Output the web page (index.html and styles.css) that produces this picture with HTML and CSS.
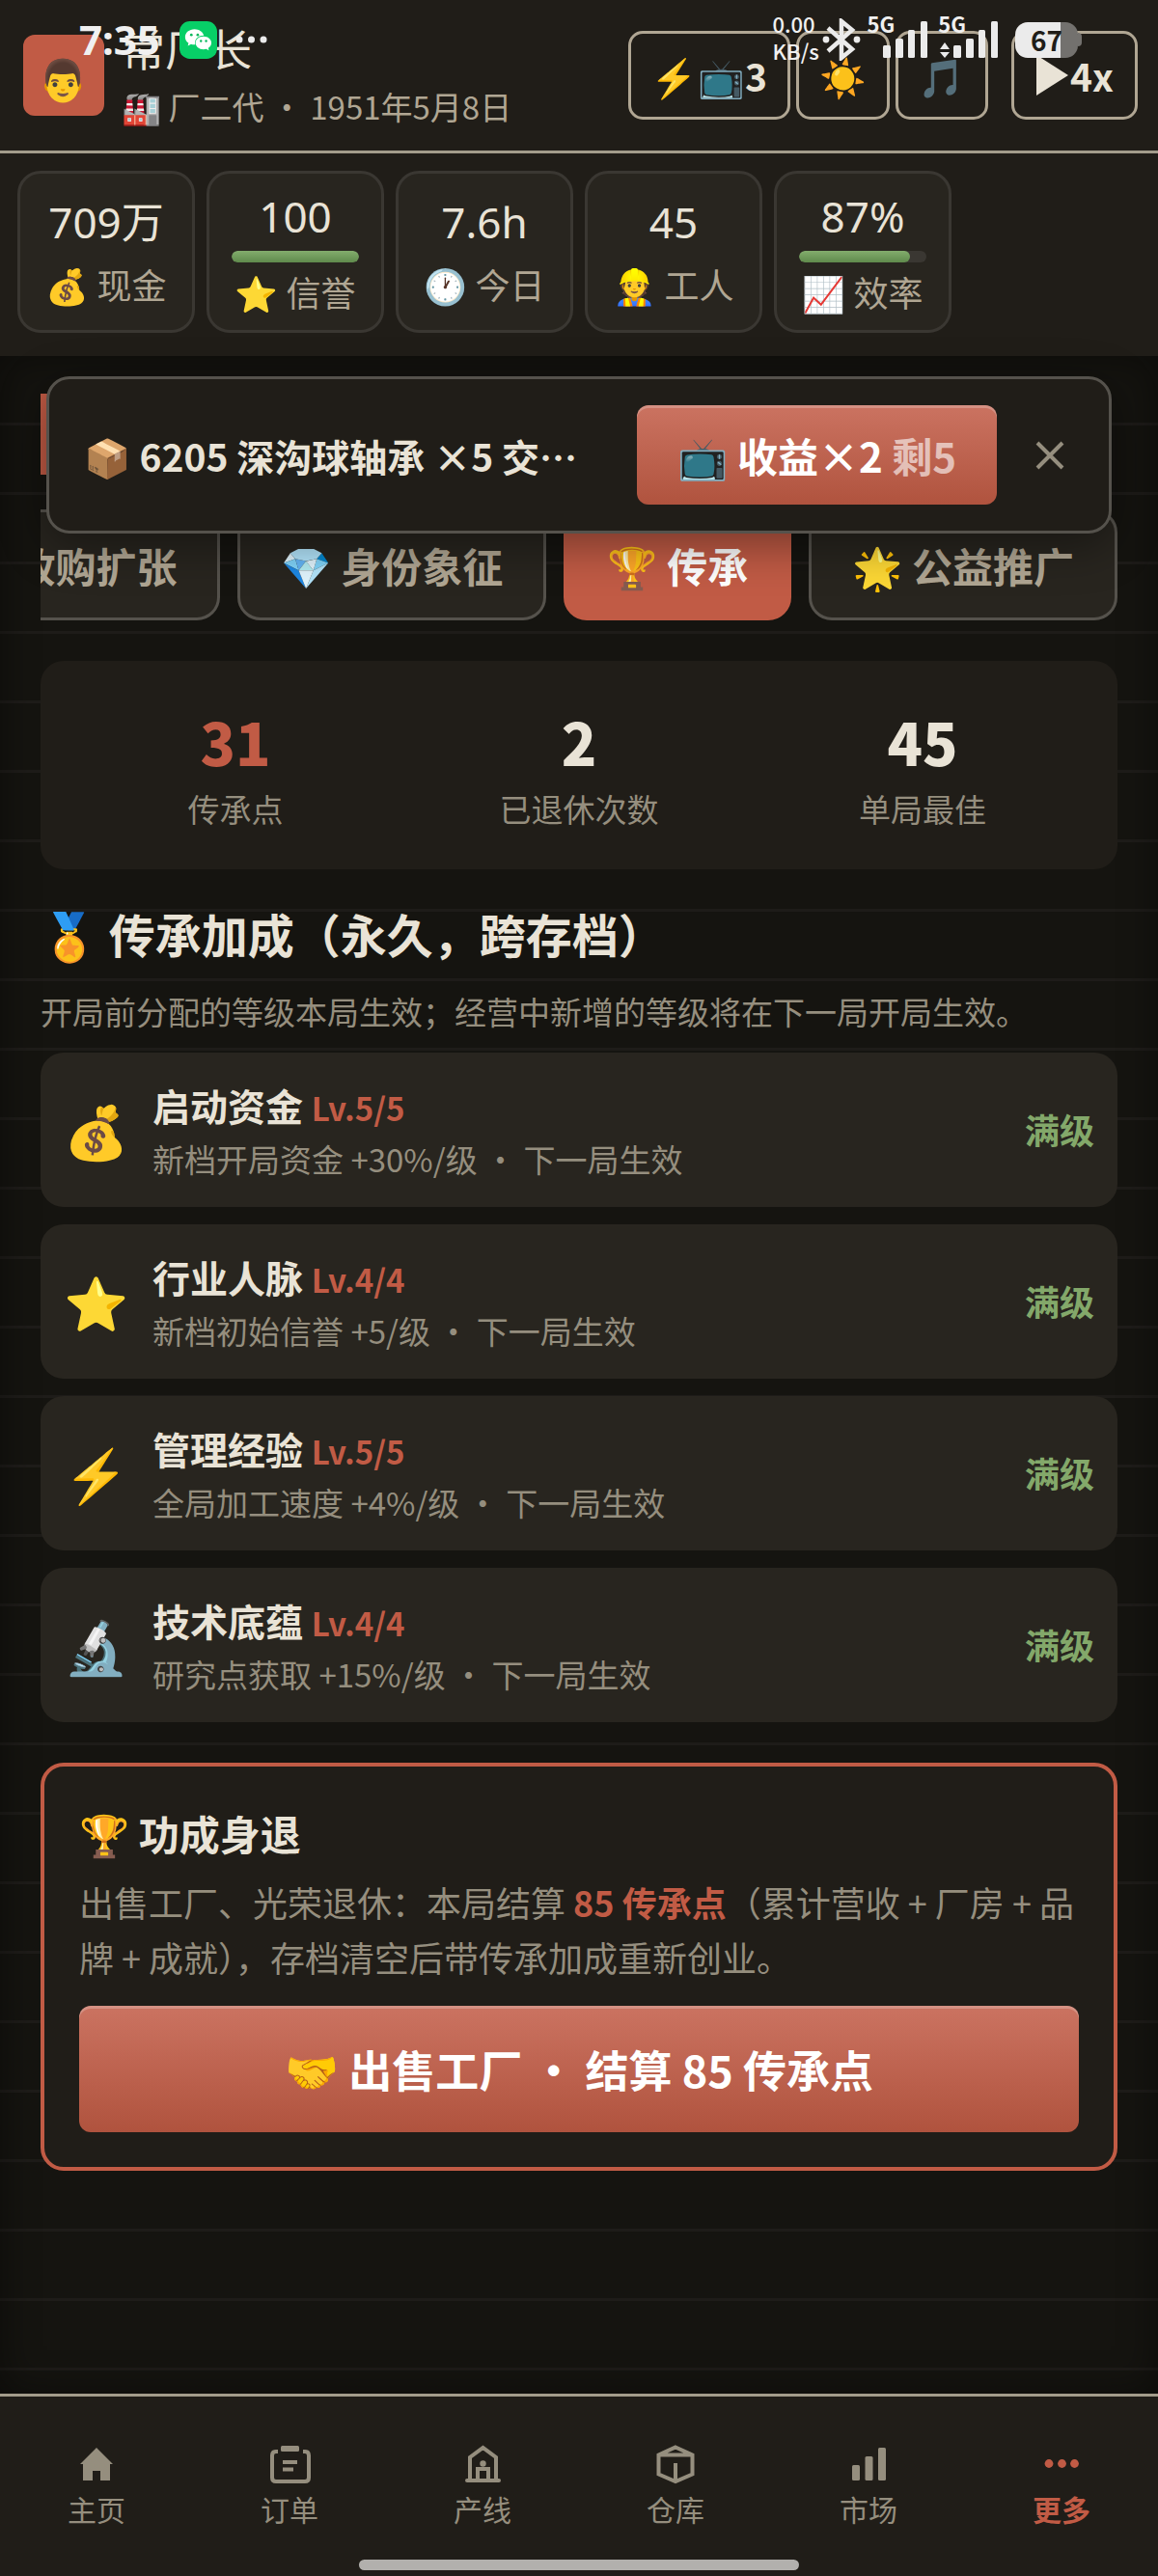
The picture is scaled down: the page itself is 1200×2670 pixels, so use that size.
FILE: index.html
```html
<!DOCTYPE html>
<html lang="zh-CN">
<head>
<meta charset="utf-8">
<meta name="viewport" content="width=device-width, initial-scale=1">
<title>常厂长</title>
<link rel="stylesheet" href="styles.css">
</head>
<body>
<div class="status">
  <div class="status-group">
    <span class="clock">7:35</span>
    <svg class="wechat" viewBox="0 0 40 40" aria-label="微信">
      <rect width="40" height="40" rx="11" fill="#07cf67"/>
      <path fill="#fff" d="M16 8.500c-5.600 0-10 3.700-10 8.300 0 2.600 1.400 4.800 3.600 6.300l-.7 3 3.400-1.800c1.100.3 2.300.6 3.700.6h.8c-.2-.6-.3-1.300-.3-2 0-4.300 4-7.700 9-7.700h.4C24.900 11.400 20.800 8.500 16 8.500z"/>
      <path fill="#fff" d="M25.500 16.200c-4.700 0-8.400 3-8.400 6.800s3.700 6.900 8.400 6.900c1 0 2-.2 2.900-.4l2.800 1.500-.6-2.500c2-1.300 3.300-3.300 3.300-5.500 0-3.800-3.700-6.800-8.400-6.800z"/>
      <g fill="#07b85c"><circle cx="12.600" cy="14.500" r="1.400"/><circle cx="19.400" cy="14.500" r="1.400"/><circle cx="22.800" cy="21" r="1.200"/><circle cx="28.300" cy="21" r="1.200"/></g>
    </svg>
    <svg class="more-dots" viewBox="0 0 34 10" aria-hidden="true"><circle cx="5" cy="5" r="3.500"/><circle cx="17.500" cy="5" r="3.500"/><circle cx="30" cy="5" r="3.500"/></svg>
  </div>
  <div class="status-group">
    <span class="speed">0.00<br>KB/s</span>
    <svg class="bluetooth" viewBox="0 0 40 44" aria-label="蓝牙"><path d="M6 10l25 22-11 9V3l11 9L6 34" fill="none" stroke="#ebebeb" stroke-width="4.500"/><circle cx="4" cy="22" r="3.400"/><circle cx="36" cy="22" r="3.400"/></svg>
    <span class="network">5G</span>
    <svg class="signal" viewBox="0 0 48 38" aria-label="信号"><rect y="25" width="8" height="13" rx="1.500"/><rect x="13" y="18" width="8" height="20" rx="1.500"/><rect x="26" y="9" width="7" height="29" rx="1.500"/><rect x="39" width="7" height="38" rx="1.500"/></svg>
    <span class="network network-second">5G</span>
    <svg class="signal signal-data" viewBox="0 0 62 38" aria-label="信号"><path d="M0 29l5-7 5 7zM0 32l5 6 5-6z"/><rect x="14" y="25" width="8" height="13" rx="1.500"/><rect x="27" y="18" width="8" height="20" rx="1.500"/><rect x="40" y="9" width="7" height="29" rx="1.500"/><rect x="53" width="7" height="38" rx="1.500"/></svg>
    <span class="battery"><span>67</span></span>
    <span class="battery-tip"></span>
  </div>
</div>

<header class="topbar">
  <div class="avatar">👨</div>
  <div class="player">
    <div class="player-name">常厂长</div>
    <div class="player-sub">🏭 厂二代 · 1951年5月8日</div>
  </div>
  <div class="tools">
    <button class="tool" type="button">⚡📺3</button>
    <button class="tool" type="button">☀️</button>
    <button class="tool" type="button">🎵</button>
    <button class="tool tool-speed" type="button"><svg viewBox="0 0 36 42" aria-hidden="true"><path d="M1 0l33 21L1 42z"/></svg>4x</button>
  </div>
</header>

<section class="stats">
  <div class="stat"><div class="stat-value">709万</div><div class="stat-label">💰 现金</div></div>
  <div class="stat stat-metered"><div class="stat-value">100</div><div class="meter"><div class="meter-fill" style="width:100%"></div></div><div class="stat-label">⭐ 信誉</div></div>
  <div class="stat"><div class="stat-value">7.6h</div><div class="stat-label">🕐 今日</div></div>
  <div class="stat"><div class="stat-value">45</div><div class="stat-label">👷 工人</div></div>
  <div class="stat stat-metered"><div class="stat-value">87%</div><div class="meter"><div class="meter-fill" style="width:87%"></div></div><div class="stat-label">📈 效率</div></div>
</section>

<main class="page">
  <div class="toast">
    <div class="toast-text">📦 6205 深沟球轴承 ×5 交付完成</div>
    <button class="primary toast-action" type="button">📺 收益×2 <span class="remaining">剩5</span></button>
    <button class="toast-close" type="button" aria-label="关闭"><svg viewBox="0 0 30 30"><path d="M2 2l26 26M28 2L2 28"/></svg></button>
  </div>

  <div class="page-title"></div>

  <nav class="tabs">
    <button class="tab" type="button">收购扩张</button>
    <button class="tab" type="button">💎 身份象征</button>
    <button class="tab tab-active" type="button">🏆 传承</button>
    <button class="tab" type="button">🌟 公益推广</button>
  </nav>

  <section class="summary">
    <div><div class="summary-value accent">31</div><div class="summary-label">传承点</div></div>
    <div><div class="summary-value">2</div><div class="summary-label">已退休次数</div></div>
    <div><div class="summary-value">45</div><div class="summary-label">单局最佳</div></div>
  </section>

  <h2 class="heading">🏅 传承加成（永久，跨存档）</h2>
  <p class="hint">开局前分配的等级本局生效；经营中新增的等级将在下一局开局生效。</p>

  <ul class="perks">
    <li class="perk"><span class="perk-icon">💰</span><div class="perk-body"><h3 class="perk-name">启动资金 <span class="perk-level">Lv.5/5</span></h3><p class="perk-desc">新档开局资金 +30%/级 · 下一局生效</p></div><span class="perk-state">满级</span></li>
    <li class="perk"><span class="perk-icon">⭐</span><div class="perk-body"><h3 class="perk-name">行业人脉 <span class="perk-level">Lv.4/4</span></h3><p class="perk-desc">新档初始信誉 +5/级 · 下一局生效</p></div><span class="perk-state">满级</span></li>
    <li class="perk"><span class="perk-icon">⚡</span><div class="perk-body"><h3 class="perk-name">管理经验 <span class="perk-level">Lv.5/5</span></h3><p class="perk-desc">全局加工速度 +4%/级 · 下一局生效</p></div><span class="perk-state">满级</span></li>
    <li class="perk"><span class="perk-icon">🔬</span><div class="perk-body"><h3 class="perk-name">技术底蕴 <span class="perk-level">Lv.4/4</span></h3><p class="perk-desc">研究点获取 +15%/级 · 下一局生效</p></div><span class="perk-state">满级</span></li>
  </ul>

  <section class="retire">
    <h3 class="retire-title">🏆 功成身退</h3>
    <p class="retire-text">出售工厂、光荣退休：本局结算 <b class="accent">85 传承点</b>（累计营收 + 厂房 + 品牌 + 成就），存档清空后带传承加成重新创业。</p>
    <button class="primary retire-button" type="button">🤝 出售工厂 · 结算 85 传承点</button>
  </section>
</main>

<nav class="bottom-nav">
  <a class="nav-item" href="#home"><svg viewBox="0 0 48 48"><path d="M24 7l17 17h-3v17H28V31h-8v10H10V24H7z"/></svg>主页</a>
  <a class="nav-item" href="#orders"><svg viewBox="0 0 48 48"><path class="line" d="M12 11H10q-4 0-4 4v23q0 4 4 4h30q4 0 4-4V15q0-4-4-4h-2"/><rect x="15" y="5" width="19" height="6" rx="1.500"/><path d="M17 20h15v4H17zM17 27.500h11v4H17z"/></svg>订单</a>
  <a class="nav-item" href="#lines"><svg viewBox="0 0 48 48"><path class="line" d="M11 41V17L24.500 7 38 17v24M19 41V29h11v12M8 41h33" stroke-linecap="round"/><circle cx="24.500" cy="23.500" r="3.200"/></svg>产线</a>
  <a class="nav-item" href="#store"><svg viewBox="0 0 48 48"><path class="line" d="M24 6.500l17.500 8v20L24 42 6.500 34.500v-20zM6.500 14.500h35M24 23v19"/></svg>仓库</a>
  <a class="nav-item" href="#market"><svg viewBox="0 0 48 48"><rect x="7" y="25" width="8" height="16" rx="1.500"/><rect x="20.500" y="16" width="8" height="25" rx="1.500"/><rect x="34" y="7" width="8" height="34" rx="1.500"/></svg>市场</a>
  <a class="nav-item nav-active" href="#more" aria-current="page"><svg viewBox="0 0 48 48"><circle cx="11" cy="23.500" r="4.400"/><circle cx="24.500" cy="23.500" r="4.400"/><circle cx="37.500" cy="23.500" r="4.400"/></svg>更多</a>
  <span class="home-indicator"></span>
</nav>
</body>
</html>
```

FILE: styles.css
```css
:root {
  --ground: #151410;
  --panel: #201d18;
  --card: #28251f;
  --line: #55524c;
  --rule: #a39c8b;
  --text: #e9e3d6;
  --text-soft: #b0a693;
  --text-dim: #958e7e;
  --accent: #c15b45;
  --good: #83a86a;
}

* { box-sizing: border-box; }

body {
  margin: 0;
  min-height: 100vh;
  display: flex;
  flex-direction: column;
  position: relative;
  background: var(--panel);
  color: var(--text);
  font-family: "Noto Sans CJK SC", "Noto Color Emoji", sans-serif;
}

h2, h3, p, ul { margin: 0; padding: 0; }
ul { list-style: none; }
button { font-family: inherit; font-weight: 700; margin: 0; }
.accent { color: var(--accent); }

/* System status bar, drawn over the header */
.status {
  position: absolute;
  inset: 0 0 auto;
  z-index: 10;
  height: 82px;
  padding: 0 79px 0 82px;
  display: flex;
  justify-content: space-between;
  align-items: center;
  color: #f0f0f0;
  fill: #ebebeb;
}
.status-group { display: flex; align-items: center; }
.clock { font-size: 42px; line-height: 42px; font-weight: 700; font-family: "Noto Sans", sans-serif; width: 104px; }
.wechat { width: 39px; height: 39px; }
.more-dots { width: 34px; height: 10px; margin-left: 18px; }
.speed { font-size: 22px; line-height: 28px; font-weight: 500; width: 52px; margin-bottom: 6px; }
.bluetooth { width: 40px; height: 44px; }
.network { font-size: 22px; line-height: 24px; font-weight: 700; margin: 0 -12px 34px 6px; }
.network-second { margin: 0 -27px 34px 9px; }
.signal { width: 48px; height: 38px; }
.signal-data { width: 62px; }
.battery {
  width: 65px;
  height: 37px;
  margin-left: 16px;
  border-radius: 13px;
  display: flex;
  align-items: center;
  justify-content: center;
  background: linear-gradient(90deg, #ebebeb 72%, #73716e 72%);
  color: #201d18;
  font-size: 28px;
  line-height: 32px;
  font-weight: 700;
}
.battery-tip { width: 4px; height: 14px; border-radius: 0 4px 4px 0; background: #73716e; }

.topbar {
  min-height: 159px;
  padding: 0 21px 0 24px;
  display: flex;
  align-items: center;
  border-bottom: 3px solid var(--rule);
}
.avatar {
  width: 84px;
  height: 84px;
  border-radius: 12px;
  background: var(--accent);
  font-size: 42px;
  line-height: 88px;
  text-align: center;
}
.player { flex: 1; margin-left: 18px; }
.player-name { font-size: 45px; line-height: 64px; }
.player-sub { font-size: 33px; line-height: 56px; color: var(--text-soft); }
.tools { display: flex; gap: 6px; }
.tool {
  height: 92px;
  padding: 0 21px;
  display: flex;
  align-items: center;
  border: 3px solid var(--text-soft);
  border-radius: 15px;
  background: transparent;
  color: var(--text);
  font-size: 39px;
}
.tool-speed { margin-left: 18px; padding: 0 22px; }
.tool-speed svg { width: 36px; height: 42px; fill: currentColor; }

.stats { display: flex; gap: 12px; padding: 18px 18px 24px; }
.stat {
  width: 184px;
  height: 168px;
  padding-bottom: 4px;
  border: 3px solid #3a3732;
  border-radius: 24px;
  background: var(--card);
  display: flex;
  flex-direction: column;
  align-items: center;
  justify-content: center;
  gap: 8px;
}
.stat-metered { gap: 5px; padding-bottom: 3px; }
.stat-value { font-family: "Noto Sans", "Noto Sans CJK SC", sans-serif; font-size: 44px; line-height: 62px; }
.stat-label { font-size: 36px; line-height: 50px; color: var(--text-soft); }
.meter { width: 132px; height: 12px; border-radius: 6px; background: #3a3732; overflow: hidden; }
.meter-fill { height: 100%; border-radius: 6px; background: linear-gradient(#83ad6d, #5f8a4c); }

.page {
  flex: 1;
  position: relative;
  padding: 39px 42px;
  background: repeating-linear-gradient(transparent 0 69px, #1e1c19 69px 72px), var(--ground);
  box-shadow: inset 0 0 40px rgba(0, 0, 0, .45);
}

.toast {
  position: absolute;
  inset: 21px 48px auto;
  z-index: 2;
  height: 163px;
  padding: 0 46px 0 36px;
  display: flex;
  align-items: center;
  border: 3px solid var(--line);
  border-radius: 24px;
  background: var(--panel);
  box-shadow: 0 12px 48px rgba(0, 0, 0, .4);
}
.toast-text {
  flex: 1;
  margin-right: 56px;
  font-size: 39px;
  line-height: 60px;
  font-weight: 700;
  overflow: hidden;
  white-space: nowrap;
  text-overflow: ellipsis;
}
.primary {
  border: 0;
  border-radius: 12px;
  color: #fff;
  background: linear-gradient(#cb7361, #b0533e);
  box-shadow: inset 0 3px 0 rgba(255, 255, 255, .22);
}
.toast-action { height: 103px; padding: 0 42px; font-size: 42px; white-space: nowrap; }
.remaining { opacity: .6; }
.toast-close { margin-left: 40px; padding: 0; border: 0; background: none; display: flex; }
.toast-close svg { width: 30px; height: 30px; fill: none; stroke: var(--text-dim); stroke-width: 4; }

.page-title { height: 84px; border-left: 12px solid var(--accent); }

.tabs { display: flex; gap: 18px; justify-content: flex-end; overflow: hidden; margin-top: 36px; }
.tab {
  flex: none;
  height: 115px;
  padding: 0 42px;
  border: 3px solid var(--line);
  border-radius: 24px;
  background: var(--card);
  color: var(--text-soft);
  font-size: 42px;
}
.tab-active { border-color: var(--accent); background: var(--accent); color: #fff; }

.summary {
  margin-top: 42px;
  padding: 38px 24px;
  display: grid;
  grid-template-columns: repeat(3, 1fr);
  text-align: center;
  border-radius: 24px;
  background: var(--panel);
}
.summary-value { font-size: 60px; line-height: 90px; font-weight: 900; }
.summary-label { font-size: 33px; line-height: 50px; color: var(--text-dim); }

.heading { margin-top: 30px; font-size: 48px; line-height: 72px; font-weight: 700; }
.hint { margin-top: 20px; font-size: 33px; line-height: 50px; color: var(--text-dim); }

.perks { margin-top: 18px; display: flex; flex-direction: column; gap: 18px; }
.perk {
  padding: 23px 24px 25px;
  display: flex;
  align-items: center;
  gap: 24px;
  border-radius: 24px;
  background: var(--card);
}
.perk-icon { width: 68px; font-size: 54px; line-height: 72px; text-align: center; white-space: nowrap; }
.perk-body { flex: 1; }
.perk-name { font-size: 39px; line-height: 62px; font-weight: 700; }
.perk-level { font-size: 33px; line-height: 40px; color: var(--accent); }
.perk-desc { font-size: 33px; line-height: 50px; color: var(--text-dim); }
.perk-state { font-size: 36px; line-height: 54px; font-weight: 700; color: var(--good); }

.retire {
  margin-top: 42px;
  padding: 34px 36px 36px;
  border: 4px solid var(--accent);
  border-radius: 24px;
  background: var(--panel);
}
.retire-title { font-size: 42px; line-height: 70px; font-weight: 700; }
.retire-text { margin-top: 8px; font-size: 36px; line-height: 57px; color: var(--text-dim); }
.retire-button { width: 100%; height: 131px; margin-top: 22px; font-size: 45px; display: block; }

.bottom-nav {
  position: relative;
  padding: 46px 0 50px;
  display: grid;
  grid-template-columns: repeat(6, 1fr);
  border-top: 3px solid var(--rule);
  background: var(--panel);
}
.nav-item {
  display: flex;
  flex-direction: column;
  align-items: center;
  gap: 2px;
  color: var(--text-dim);
  font-size: 30px;
  line-height: 40px;
  text-decoration: none;
}
.nav-item svg { width: 48px; height: 48px; fill: currentColor; }
.nav-item .line { fill: none; stroke: currentColor; stroke-width: 4; }
.nav-active { color: var(--accent); font-weight: 700; }
.home-indicator {
  position: absolute;
  left: 31%;
  right: 31%;
  bottom: 6px;
  height: 11px;
  border-radius: 6px;
  background: #b2b0ad;
}
```
